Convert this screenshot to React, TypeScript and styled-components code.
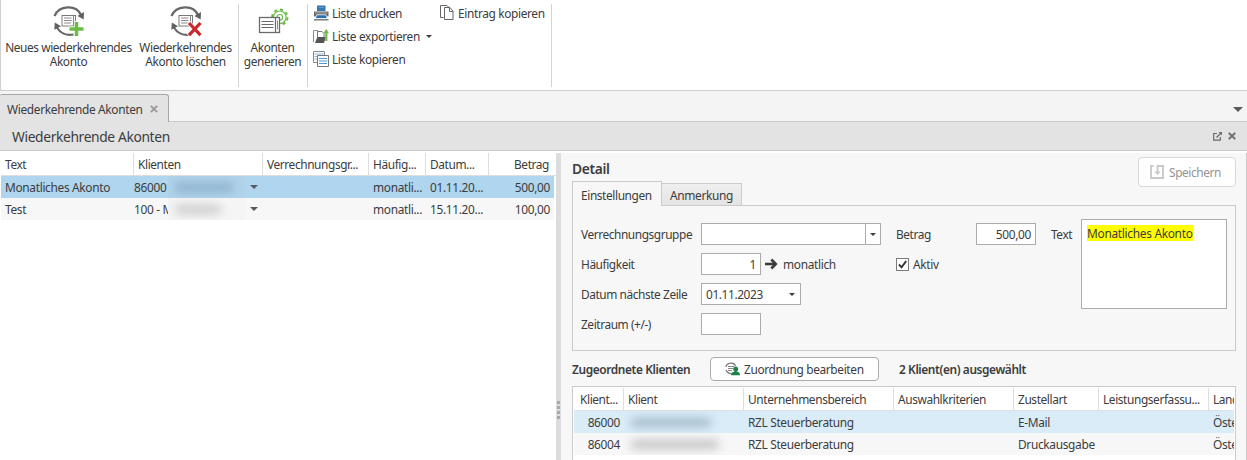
import React from "react";
import styled, { createGlobalStyle, css } from "styled-components";

const Global = createGlobalStyle`
  html, body { margin: 0; padding: 0; }
  body { width: 1247px; height: 460px; overflow: hidden; background: #fff; }
  * { box-sizing: border-box; }
  #root {
    font-family: "Noto Sans", "Open Sans", sans-serif;
    font-size: 11.9px;
    color: #3c3c3c;
    letter-spacing: -0.33px;
  }
`;

const Window = styled.div`
  width: 1247px;
  height: 460px;
  overflow: hidden;
  display: flex;
  flex-direction: column;
`;

/* Ribbon */
const Ribbon = styled.div`
  height: 91px;
  flex: none;
  display: flex;
  border-left: 1px solid #cfcfcf;
  border-bottom: 1px solid #cdcdcd;
`;
const RibbonGroup = styled.div<{ $w: number; $pad?: number }>`
  width: ${(p) => p.$w}px;
  height: 83px;
  margin-top: 4px;
  padding-left: ${(p) => p.$pad ?? 0}px;
  border-right: 1px solid #d4d4d4;
  display: flex;
`;
const BigButton = styled.div<{ $w: number }>`
  width: ${(p) => p.$w}px;
  display: flex;
  flex-direction: column;
  align-items: center;
  text-align: center;
  line-height: 14px;
  letter-spacing: -0.42px;
  white-space: nowrap;
  svg { display: block; margin-bottom: 4px; }
`;
const SmallList = styled.div<{ $w: number }>`
  width: ${(p) => p.$w}px;
  margin-top: -2px;
`;
const SmallButton = styled.div`
  height: 23px;
  display: flex;
  align-items: center;
  gap: 3px;
  padding-bottom: 1px;
  letter-spacing: -0.36px;
  white-space: nowrap;
`;
const Caret = styled.i<{ $s?: number; $color?: string }>`
  display: block;
  flex: none;
  width: 0;
  height: 0;
  border: ${(p) => p.$s ?? 3}px solid transparent;
  border-top-color: ${(p) => p.$color ?? "#3c3c3c"};
  border-bottom: 0;
`;
const MenuCaret = styled(Caret)`
  margin-left: 3px;
`;

/* Document tabs */
const TabStrip = styled.div`
  height: 31px;
  flex: none;
  background: #f4f4f4;
  border-bottom: 1px solid #cbcbcb;
  display: flex;
  justify-content: space-between;
  align-items: flex-start;
  padding: 3px 4px 0 0;
`;
const DocTab = styled.div`
  width: 169px;
  height: 28px;
  background: #e3e3e3;
  border: 1px solid #a6a6a6;
  border-left: 0;
  border-bottom: 0;
  border-radius: 2px 3px 0 0;
  padding: 0 10px 0 7px;
  display: flex;
  align-items: center;
  justify-content: space-between;
  white-space: nowrap;
`;
const StripMenu = styled.div`
  padding-top: 13px;
`;
const TitleBar = styled.div`
  height: 29px;
  flex: none;
  background: #e3e3e3;
  border-bottom: 1px solid #cbcbcb;
  display: flex;
  align-items: center;
  justify-content: space-between;
  padding: 0 11px 0 12px;
  font-size: 13.8px;
  letter-spacing: -0.36px;
`;
const TitleTools = styled.div`
  display: flex;
  gap: 6px;
  align-items: center;
`;

/* Body */
const Body = styled.div`
  flex: 1;
  display: flex;
  min-height: 0;
  padding-top: 2px;
  background: #fff;
`;
const ListPane = styled.div`
  width: 556px;
  padding-left: 1px;
`;
const Splitter = styled.div`
  width: 5px;
  background: #dcdcdc;
  display: flex;
  flex-direction: column;
  align-items: center;
  padding-top: 248px;
  gap: 2px;
`;
const Grip = styled.i`
  width: 3px;
  height: 3px;
  background: #a9a9a9;
`;
const DetailPane = styled.div`
  width: 686px;
  background: #f7f7f7;
  border-right: 1px solid #cbcbcb;
  padding: 0 10px 0 11px;
  display: flex;
  flex-direction: column;
`;

/* Grid table */
const HeadRow = styled.div`
  display: flex;
  height: 23px;
  border-bottom: 1px solid #dedede;
  background: #fff;
  letter-spacing: -0.4px;
`;
const Row = styled.div<{ $bg: string; $w?: number }>`
  display: flex;
  width: ${(p) => (p.$w ? `${p.$w}px` : "auto")};
  height: 22px;
  background: ${(p) => p.$bg};
`;
const Cell = styled.div<{ $w: number; $head?: boolean; $right?: boolean; $pl?: number; $pr?: number }>`
  width: ${(p) => p.$w}px;
  flex: none;
  display: flex;
  align-items: center;
  justify-content: ${(p) => (p.$right ? "flex-end" : "flex-start")};
  padding-left: ${(p) => p.$pl ?? 4}px;
  padding-right: ${(p) => p.$pr ?? 0}px;
  padding-bottom: ${(p) => (p.$head ? 0 : 1)}px;
  white-space: nowrap;
  overflow: hidden;
  ${(p) => p.$head && css`
    border-right: 1px solid #dedede;
    &:last-child { border-right: 0; }
  `}
`;
const Redacted = styled.span<{ $w: number; $c: string; $bg: string; $ink: number }>`
  width: ${(p) => p.$w}px;
  height: 22px;
  flex: none;
  margin-bottom: -1px;
  background: ${(p) => p.$bg};
  overflow: hidden;
  display: flex;
  align-items: center;
  padding-left: 7px;
  &::before {
    content: "";
    width: ${(p) => p.$ink}px;
    height: 9px;
    border-radius: 4px;
    background: ${(p) => p.$c};
    filter: blur(5px);
  }
`;
const ClientNo = styled.span`
  width: 34px;
  flex: none;
  overflow: hidden;
`;
const CellCaret = styled.span`
  margin-left: auto;
  padding-right: 5px;
`;

/* Detail */
const DetailHead = styled.div`
  display: flex;
  height: 52px;
  flex: none;
  justify-content: space-between;
`;
const HeadLeft = styled.div`
  display: flex;
  flex-direction: column;
  justify-content: space-between;
`;
const Heading = styled.div`
  font-weight: 600;
  font-size: 13.8px;
  line-height: 20px;
  padding-top: 6px;
`;
const Tabs = styled.div`
  display: flex;
  align-items: flex-end;
  letter-spacing: -0.4px;
`;
const Tab = styled.div<{ $active?: boolean; $w: number }>`
  width: ${(p) => p.$w}px;
  padding-left: 8px;
  border: 1px solid #cbcbcb;
  border-bottom: 0;
  white-space: nowrap;
  ${(p) => p.$active
    ? css`height: 25px; line-height: 26px; background: #f7f7f7; margin-bottom: -1px; position: relative; z-index: 1;`
    : css`height: 22px; line-height: 22px; background: linear-gradient(#efefef, #e4e4e4); border-left: 0; letter-spacing: -0.33px;`}
`;
const SaveButton = styled.div`
  width: 98px;
  height: 30px;
  margin-top: 4px;
  background: #fff;
  border: 1px solid #d9d9d9;
  border-radius: 4px;
  color: #939393;
  display: flex;
  align-items: center;
  padding-left: 11px;
  gap: 5px;
  letter-spacing: -0.4px;
`;
const FormBox = styled.div`
  height: 146px;
  flex: none;
  border: 1px solid #cbcbcb;
  padding: 13px 8px 0 8px;
  display: flex;
  gap: 15px;
`;
const FieldColumn = styled.div<{ $w: number }>`
  width: ${(p) => p.$w}px;
  padding-top: 4px;
  display: flex;
  flex-direction: column;
  gap: 8px;
`;
const Field = styled.div`
  display: flex;
  align-items: center;
  height: 22px;
  white-space: nowrap;
`;
const Label = styled.div<{ $w: number }>`
  width: ${(p) => p.$w}px;
  letter-spacing: -0.43px;
`;
const Input = styled.div<{ $w: number; $right?: boolean }>`
  width: ${(p) => p.$w}px;
  height: 22px;
  border: 1px solid #ababab;
  background: #fff;
  display: flex;
  align-items: center;
  justify-content: ${(p) => (p.$right ? "flex-end" : "space-between")};
  padding: 0 4px;
`;
const DateInput = styled(Input)`
  letter-spacing: -0.4px;
  padding-right: 5px;
`;
const Combo = styled(Input)`
  justify-content: flex-end;
  padding: 0;
`;
const ComboDrop = styled.div`
  width: 15px;
  height: 20px;
  border-left: 1px solid #ababab;
  display: flex;
  align-items: center;
  justify-content: center;
`;
const Unit = styled.span`
  display: flex;
  align-items: center;
  gap: 5px;
  margin-left: 4px;
`;
const CheckBox = styled.span`
  width: 13px;
  height: 13px;
  border: 1px solid #7c7c7c;
  background: #fff;
  margin-right: 4px;
  display: flex;
`;
const TextField = styled.div`
  display: flex;
`;
const TextArea = styled.div`
  width: 146px;
  height: 90px;
  border: 1px solid #ababab;
  background: #fff;
  padding: 5px;
`;
const Mark = styled.span`
  display: block;
  width: max-content;
  background: #ffff00;
  height: 16px;
  line-height: 16px;
  white-space: nowrap;
  letter-spacing: -0.3px;
`;
const AssignBar = styled.div`
  height: 35px;
  flex: none;
  display: flex;
  align-items: center;
  padding-top: 1px;
  font-weight: 600;
  letter-spacing: -0.4px;
`;
const AssignTitle = styled.div`
  width: 138px;
  white-space: nowrap;
`;
const AssignButton = styled.div`
  width: 169px;
  height: 24px;
  border: 1px solid #ababab;
  border-radius: 4px;
  background: #fff;
  font-weight: 400;
  letter-spacing: -0.36px;
  display: flex;
  align-items: center;
  padding-left: 14px;
  gap: 4px;
  margin-right: 20px;
  white-space: nowrap;
`;
const ClientTable = styled.div`
  flex: 1;
  background: #fff;
  border: 1px solid #cbcbcb;
  border-bottom: 0;
  padding: 1px 1px 0 1px;
  overflow: hidden;
`;
const ClientRows = styled.div`
  overflow: hidden;
`;

const CycleArt = () => (
  <>
    <path d="M1.500 12C6 1.500 23 0 28 11" fill="none" stroke="#686868" strokeWidth="2.200" />
    <path d="M31 8 30.700 15.500 24.500 12Z" fill="#5f5f5f" />
    <path d="M4 23.500C7 28.800 13 32 20.500 30.500" fill="none" stroke="#686868" strokeWidth="2.200" />
    <path d="M1.800 18.500 8 22.200 1.300 25.800Z" fill="#5f5f5f" />
    <rect x="9" y="11.500" width="13.500" height="10.500" fill="#fff" stroke="#7a7a7a" />
    <path d="M11 14h7.500M11 16.500h7.500M11 19h7M20.500 12v10" stroke="#8a8a8a" strokeWidth="1.100" />
  </>
);
const CycleAdd = () => (
  <svg width="32" height="32" viewBox="0 0 32 32">
    <CycleArt />
    <path d="M23.500 17v15M16 25h15" stroke="#fff" strokeWidth="5" />
    <path d="M23.500 18v14M16.500 25h14" stroke="#6cbb45" strokeWidth="3.500" />
  </svg>
);
const CycleDelete = () => (
  <svg width="32" height="32" viewBox="0 0 32 32">
    <CycleArt />
    <path d="M18.500 18.500 30.500 31.500M30.500 18.500 18.500 31.500" stroke="#fff" strokeWidth="4.500" />
    <path d="M19 19 30.500 31.200M30.500 19 19 31.200" stroke="#c9292b" strokeWidth="3.200" />
  </svg>
);
const Generate = () => (
  <svg width="32" height="32" viewBox="0 0 32 32">
    <g fill="none" stroke="#6cbb45">
      <circle cx="22.800" cy="13.300" r="6.300" strokeWidth="1.200" />
      <circle cx="22.800" cy="13.300" r="7.700" strokeWidth="2" strokeDasharray="3.024 3.024" />
      <circle cx="22.800" cy="13.300" r="2.800" strokeWidth="1.200" />
    </g>
    <rect x="2.500" y="13.500" width="20" height="15" fill="#fff" stroke="#6b6b6b" strokeWidth="1.300" />
    <path d="M4.500 17.500h12M4.500 20.500h12M4.500 23.500h12" stroke="#6b6b6b" strokeWidth="1.200" />
    <path d="M18.500 14v14" stroke="#6b6b6b" strokeWidth="1.200" />
    <path d="M20.500 16.500v9" stroke="#8a8a8a" />
  </svg>
);
const Printer = () => (
  <svg width="16" height="16" viewBox="0 0 16 16">
    <path d="M4 .500h8.500v5.500H4z" fill="#3478b5" />
    <path d="M5.500 2.500h5.500" stroke="#5f9bcd" />
    <path d="M1 6.500h14.500v5H1z" fill="#6a6a6a" />
    <path d="M2 8h12.500" stroke="#a8a8a8" />
    <path d="M3.800 9.800h9l1.700 3.700H2.200z" fill="#2a6ead" stroke="#fff" strokeWidth=".8" />
    <path d="M1 14.800h14.500" stroke="#6a6a6a" strokeWidth="1.300" />
  </svg>
);
const Export = () => (
  <svg width="16" height="16" viewBox="0 0 16 16">
    <path d="M.5 14V2.500h4l1 1.500h3" fill="none" stroke="#8a8a8a" />
    <path d="M4.500 9V3.500h4.500l2 2V9" fill="#fff" stroke="#777" />
    <path d="M2 15 4.300 9h8.500L11 15z" fill="#555" />
    <path d="M13.300 13V4" stroke="#6cbb45" strokeWidth="2.200" />
    <path d="M10.300 5.200 13.300 1 16 5.200z" fill="#6cbb45" />
  </svg>
);
const CopyList = () => (
  <svg width="16" height="16" viewBox="0 0 16 16">
    <path d="M.5.500h11v11H.500z" fill="#fff" stroke="#8a8a8a" />
    <path d="M1.500 3h9M1.500 5.500h9M1.500 8h9" stroke="#7fb6e2" />
    <path d="M4.500 4.500h11v11h-11z" fill="#fff" stroke="#777" />
    <path d="M6 7.500h8M6 10h8M6 12.500h8" stroke="#4d97d4" />
  </svg>
);
const CopyEntry = () => (
  <svg width="16" height="16" viewBox="0 0 16 16">
    <path d="M4.500 12.500h-3v-12h6.500l1.500 1.500" fill="none" stroke="#666" />
    <path d="M5.500 2.500h5.500l3 3.500v8.500h-8.500z" fill="#fff" stroke="#666" />
    <path d="M10.500 2.500V6.500h3.500" fill="none" stroke="#666" />
  </svg>
);
const Close = ({ color, size }: { color: string; size: number }) => (
  <svg width={size} height={size} viewBox="0 0 8 8">
    <path d="M.8.800 7.200 7.200M7.200.800.800 7.200" stroke={color} strokeWidth="1.900" />
  </svg>
);
const PopOut = () => (
  <svg width="9" height="9" viewBox="0 0 9 9">
    <path d="M4 1.500H.700v6.700h6.600V5" fill="none" stroke="#6a6a6a" strokeWidth="1.200" />
    <path d="M3.500 5.500 7.500 1.500" stroke="#6a6a6a" strokeWidth="1.200" />
    <path d="M5.500 0H9v3.500z" fill="#6a6a6a" />
  </svg>
);
const Save = () => (
  <svg width="14" height="14" viewBox="0 0 14 14">
    <path d="M3.500 1H1v12h12V1H7.500v7" fill="none" stroke="#c8c8c8" strokeWidth="1.800" />
    <path d="M4.300 6.500h6.400L7.500 10z" fill="#c8c8c8" />
  </svg>
);
const Arrow = () => (
  <svg width="13" height="12" viewBox="0 0 13 12">
    <path d="M0 6h11" stroke="#3c3c3c" strokeWidth="2.600" />
    <path d="M6.300 1.500 10.800 6 6.300 10.500" fill="none" stroke="#3c3c3c" strokeWidth="2.600" />
  </svg>
);
const Assign = () => (
  <svg width="15" height="14" viewBox="0 0 15 14">
    <path d="M.8 5C2 .5 9 -.5 10.500 4M1 8c1 2.500 3 3.500 5.500 3.500" fill="none" stroke="#777" strokeWidth="1.200" />
    <path d="M3 4.500h6M3 6.500h5M3 8.500h4" stroke="#8a8a8a" />
    <circle cx="10.700" cy="6.900" r="2.500" fill="#1d8348" />
    <path d="M9.500 8h2.400v2H9.500z" fill="#1d8348" />
    <path d="M6 13.300c0-3.300 2.500-3.500 4.700-3.500s4.300.2 4.300 3.500z" fill="#1d8348" />
  </svg>
);

const accounts = [
  { text: "Monatliches Akonto", client: "86000", date: "01.11.20...", sum: "500,00", bg: "#b0d5ee", patch: "#b0d3ea", ink: "#8db1cc", inkW: 58 },
  { text: "Test", client: "100 - M", date: "15.11.20...", sum: "100,00", bg: "#f7f7f7", patch: "#f5f5f5", ink: "#cbcbcb", inkW: 46 },
];
const clients = [
  { no: "86000", way: "E-Mail", bg: "#d9ecf8", ink: "#a3bac9", inkW: 80 },
  { no: "86004", way: "Druckausgabe", bg: "#f7f7f7", ink: "#c4c4c4", inkW: 88 },
];

export default function App() {
  return (
    <>
      <Global />
      <Window>
        <Ribbon>
          <RibbonGroup $w={238}>
            <BigButton $w={135}><CycleAdd />Neues wiederkehrendes<br />Akonto</BigButton>
            <BigButton $w={99}><CycleDelete />Wiederkehrendes<br />Akonto löschen</BigButton>
          </RibbonGroup>
          <RibbonGroup $w={69}>
            <BigButton $w={67}><Generate />Akonten<br />generieren</BigButton>
          </RibbonGroup>
          <RibbonGroup $w={244} $pad={5}>
            <SmallList $w={126}>
              <SmallButton><Printer />Liste drucken</SmallButton>
              <SmallButton><Export />Liste exportieren<MenuCaret /></SmallButton>
              <SmallButton><CopyList />Liste kopieren</SmallButton>
            </SmallList>
            <SmallList $w={110}>
              <SmallButton><CopyEntry />Eintrag kopieren</SmallButton>
            </SmallList>
          </RibbonGroup>
        </Ribbon>
        <TabStrip>
          <DocTab>Wiederkehrende Akonten<Close color="#9a9a9a" size={8} /></DocTab>
          <StripMenu><Caret $s={5} $color="#5a5a5a" /></StripMenu>
        </TabStrip>
        <TitleBar>
          Wiederkehrende Akonten
          <TitleTools><PopOut /><Close color="#6a6a6a" size={8} /></TitleTools>
        </TitleBar>
        <Body>
          <ListPane>
            <HeadRow>
              <Cell $head $w={133}>Text</Cell>
              <Cell $head $w={129}>Klienten</Cell>
              <Cell $head $w={106}>Verrechnungsgr...</Cell>
              <Cell $head $w={57}>Häufig...</Cell>
              <Cell $head $w={63}>Datum...</Cell>
              <Cell $head $w={65} $right $pr={5}>Betrag</Cell>
            </HeadRow>
            {accounts.map((a) => (
              <Row key={a.text} $bg={a.bg} $w={553}>
                <Cell $w={133}>{a.text}</Cell>
                <Cell $w={129} $pl={0}>
                  <ClientNo>{a.client}</ClientNo>
                  <Redacted $w={77} $c={a.ink} $bg={a.patch} $ink={a.inkW} />
                  <CellCaret><Caret $s={4} $color="#5a5a5a" /></CellCaret>
                </Cell>
                <Cell $w={106} />
                <Cell $w={57}>monatli...</Cell>
                <Cell $w={63}>{a.date}</Cell>
                <Cell $w={65} $right $pr={4}>{a.sum}</Cell>
              </Row>
            ))}
          </ListPane>
          <Splitter><Grip /><Grip /><Grip /><Grip /></Splitter>
          <DetailPane>
            <DetailHead>
              <HeadLeft>
                <Heading>Detail</Heading>
                <Tabs>
                  <Tab $active $w={90}>Einstellungen</Tab>
                  <Tab $w={80}>Anmerkung</Tab>
                </Tabs>
              </HeadLeft>
              <SaveButton><Save />Speichern</SaveButton>
            </DetailHead>
            <FormBox>
              <FieldColumn $w={300}>
                <Field>
                  <Label $w={120}>Verrechnungsgruppe</Label>
                  <Combo $w={180}><ComboDrop><Caret /></ComboDrop></Combo>
                </Field>
                <Field>
                  <Label $w={120}>Häufigkeit</Label>
                  <Input $w={60} $right>1</Input>
                  <Unit><Arrow />monatlich</Unit>
                </Field>
                <Field>
                  <Label $w={120}>Datum nächste Zeile</Label>
                  <DateInput $w={100}>01.11.2023<Caret /></DateInput>
                </Field>
                <Field>
                  <Label $w={120}>Zeitraum (+/-)</Label>
                  <Input $w={60} />
                </Field>
              </FieldColumn>
              <FieldColumn $w={140}>
                <Field>
                  <Label $w={80}>Betrag</Label>
                  <Input $w={60} $right>500,00</Input>
                </Field>
                <Field>
                  <CheckBox>
                    <svg width="11" height="11" viewBox="0 0 11 11">
                      <path d="M2 5.500 4.500 8.300 9.200 2.200" fill="none" stroke="#333" strokeWidth="1.900" />
                    </svg>
                  </CheckBox>
                  Aktiv
                </Field>
              </FieldColumn>
              <TextField>
                <FieldColumn $w={30}><Field><Label $w={30}>Text</Label></Field></FieldColumn>
                <TextArea><Mark>Monatliches Akonto</Mark></TextArea>
              </TextField>
            </FormBox>
            <AssignBar>
              <AssignTitle>Zugeordnete Klienten</AssignTitle>
              <AssignButton><Assign />Zuordnung bearbeiten</AssignButton>
              2 Klient(en) ausgewählt
            </AssignBar>
            <ClientTable>
              <ClientRows>
                <HeadRow>
                  <Cell $head $w={50} $pl={6}>Klient...</Cell>
                  <Cell $head $w={120}>Klient</Cell>
                  <Cell $head $w={150}>Unternehmensbereich</Cell>
                  <Cell $head $w={120}>Auswahlkriterien</Cell>
                  <Cell $head $w={85}>Zustellart</Cell>
                  <Cell $head $w={110}>Leistungserfassu...</Cell>
                  <Cell $head $w={60}>Land</Cell>
                </HeadRow>
                {clients.map((c) => (
                  <Row key={c.no} $bg={c.bg}>
                    <Cell $w={50} $right $pr={4}>{c.no}</Cell>
                    <Cell $w={120} $pl={0}><Redacted $w={104} $c={c.ink} $bg="transparent" $ink={c.inkW} /></Cell>
                    <Cell $w={150}>RZL Steuerberatung</Cell>
                    <Cell $w={120} />
                    <Cell $w={85}>{c.way}</Cell>
                    <Cell $w={110} />
                    <Cell $w={60}>Österreich</Cell>
                  </Row>
                ))}
              </ClientRows>
            </ClientTable>
          </DetailPane>
        </Body>
      </Window>
    </>
  );
}
